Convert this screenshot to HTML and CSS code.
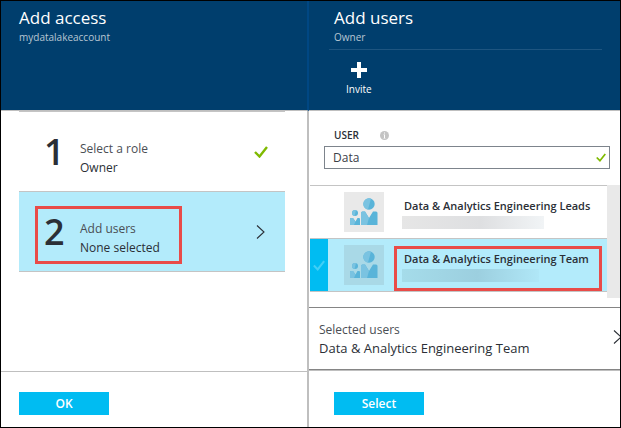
FILE: index.html
```html
<!DOCTYPE html>
<html lang="en">
<head>
<meta charset="utf-8">
<title>Add access</title>
<link rel="stylesheet" href="styles.css">
</head>
<body>
<svg class="defs" aria-hidden="true">
  <symbol id="people" viewBox="0 0 40 40">
    <circle cx="25" cy="12" r="5.700" fill="#59b4d9"/>
    <path d="M25 6.300a5.700 5.700 0 0 0-1 11.300L27 6.600z" fill="#7ac3e1"/>
    <circle cx="11" cy="21" r="3" fill="#59b4d9"/>
    <path d="M11 18a3 3 0 0 0-.5 5.950L12 18.200z" fill="#7ac3e1"/>
    <path d="M17 33V21q0-1.500 1.500-1.500h2.500l4 6.500 4-6.500h3q1.500 0 1.500 1.500v12z" fill="#59b4d9"/>
    <path d="M17 33V21q0-1.500 1.500-1.500h2.500l4 6.500-2 7z" fill="#7ac3e1"/>
    <path d="M6 33v-6q0-1 1-1h2l2.500 3.500L13.500 26h1.500q1 0 1 1v6z" fill="#59b4d9"/>
    <path d="M6 33v-6q0-1 1-1h2l2.500 3.500-1.500 3.500z" fill="#7ac3e1"/>
  </symbol>
  <symbol id="check" viewBox="0 0 14 12">
    <path d="M1 6l4.500 4.500L13 1" fill="none" stroke="currentColor" stroke-width="2.400"/>
  </symbol>
  <symbol id="chevron" viewBox="0 0 9 14">
    <path d="M1 .5l7 6.500-7 6.500" fill="none" stroke="currentColor" stroke-width="1.100"/>
  </symbol>
</svg>
<main class="blades">
  <section class="blade blade-access">
    <header class="head">
      <h1>Add access</h1>
      <p class="subtitle">mydatalakeaccount</p>
    </header>
    <div class="content">
      <ol class="steps">
        <li class="step">
          <span class="number">1</span>
          <span class="step-text"><span class="step-name">Select a role</span><span>Owner</span></span>
          <svg class="step-check"><use href="#check"/></svg>
        </li>
        <li class="step active">
          <span class="number">2</span>
          <span class="step-text"><span class="step-name">Add users</span><span>None selected</span></span>
          <svg class="step-chevron"><use href="#chevron"/></svg>
          <span class="callout"></span>
        </li>
      </ol>
    </div>
    <footer class="foot"><button class="primary" type="button">OK</button></footer>
  </section>
  <section class="blade blade-users">
    <header class="head">
      <h1>Add users</h1>
      <p class="subtitle">Owner</p>
      <div class="toolbar">
        <button class="invite" type="button">
          <svg viewBox="0 0 16 16"><path d="M6 0h4v6h6v4h-6v6H6v-6H0V6h6z" fill="#fff"/></svg>
          Invite
        </button>
      </div>
    </header>
    <div class="content">
      <div class="field">
        <div class="field-label">
          <label for="user">USER</label>
          <svg class="info" viewBox="0 0 9 9"><circle cx="4.500" cy="4.500" r="4.500" fill="#c4c4c4"/><path d="M4 1.500h1v1H4zM3.500 3.500H5V7h.5v.5h-2V7H4V4h-.5z" fill="#fff"/></svg>
        </div>
        <div class="input-wrap">
          <input id="user" type="text" value="Data">
          <svg class="input-check"><use href="#check"/></svg>
        </div>
      </div>
      <div class="results">
        <ul class="list">
          <li class="result">
            <span class="mark"></span>
            <svg class="avatar"><use href="#people"/></svg>
            <span class="who"><span class="who-name">Data &amp; Analytics Engineering Leads</span><span class="redacted"></span></span>
          </li>
          <li class="result chosen">
            <span class="mark"><svg><use href="#check"/></svg></span>
            <svg class="avatar"><use href="#people"/></svg>
            <span class="who"><span class="who-name">Data &amp; Analytics Engineering Team</span><span class="redacted"></span></span>
            <span class="callout"></span>
          </li>
        </ul>
        <div class="track"></div>
      </div>
      <div class="selected">
        <div class="selected-text"><span class="selected-label">Selected users</span><span class="selected-value">Data &amp; Analytics Engineering Team</span></div>
        <svg class="selected-chevron"><use href="#chevron"/></svg>
      </div>
    </div>
    <footer class="foot"><button class="primary" type="button">Select</button></footer>
  </section>
</main>
</body>
</html>
```
FILE: styles.css
```css
* { box-sizing: border-box; }
body {
  margin: 0;
  font-family: "Open Sans", "Noto Sans", sans-serif;
  font-size: 12px;
  line-height: 19px;
  color: #2b2f36;
}
h1, p, ol, ul { margin: 0; padding: 0; font-weight: 400; }
ol, ul { list-style: none; }
button, input { font: inherit; }
svg { display: block; flex: none; }
.defs { position: absolute; width: 0; height: 0; }

.blades {
  display: grid;
  grid-template-columns: 308fr 311fr;
  min-height: 100vh;
  border: 1px solid #000;
  background: #fff;
}
.blade { display: flex; flex-direction: column; min-width: 0; }
.head {
  min-height: 110px;
  padding: 5px 18px 0;
  background: #003e6d;
  border-bottom: 1px solid #bfbfbf;
  color: #fff;
}
.blade-users .head { padding: 5px 18px 0 25px; }
h1 { font-size: 17px; line-height: 24px; }
.subtitle { font-size: 10px; line-height: 14px; color: #b8c6d3; }
.blade-access .head { border-right: 2px solid #004783; }
.blade-access .content, .blade-access .foot { border-right: 2px solid #bfbfbf; }
.content { flex: 1; }
.foot { padding: 20px 18px 12px; border-top: 1px solid #bfbfbf; }
.blade-users .foot { padding-top: 21px; padding-left: 25px; }
.primary {
  display: block;
  width: 90px;
  height: 23px;
  padding: 0;
  border: 0;
  background: #00bcf2;
  color: #fff;
  font-size: 12px;
  font-weight: 600;
  line-height: 23px;
}
.callout { position: absolute; border: 3px solid #e94b48; }

.steps { margin: 0 22px 0 18px; border-top: 1px solid #c4c4c4; }
.step {
  position: relative;
  display: flex;
  align-items: center;
  height: 80px;
  padding: 0 17px 0 25px;
  border-bottom: 1px solid #c4c4c4;
}
.step.active { background: #b3ebfb; }
.number { width: 36px; font-size: 36px; line-height: 40px; font-weight: 600; }
.step-text { display: flex; flex: 1; flex-direction: column; padding-top: 13px; }
.step-name { color: #4a4e54; }
.step-check { width: 14px; height: 12px; color: #7fba00; }
.step-chevron { width: 9px; height: 14px; margin-right: 3px; }
.step .callout { top: 14px; left: 16px; width: 147px; height: 58px; }

.toolbar {
  margin: 5px 0 0 -5px;
  padding-top: 12px;
  border-top: 1px solid #1e5580;
}
.invite {
  display: flex;
  flex-direction: column;
  align-items: center;
  gap: 4px;
  margin-left: 17px;
  padding: 0;
  border: 0;
  background: none;
  color: #fff;
  font-size: 10px;
  line-height: 14px;
}
.invite svg { width: 16px; height: 16px; }

.field { padding: 15px 10px 16px 15px; }
.field-label {
  display: flex;
  align-items: center;
  gap: 21px;
  margin-bottom: 2px;
  padding-left: 10px;
  font-size: 10px;
  font-weight: 600;
  line-height: 18px;
}
.info { width: 9px; height: 9px; }
.input-wrap { position: relative; }
.input-wrap input {
  display: block;
  width: 100%;
  height: 23px;
  padding: 0 28px 0 8px;
  border: 1px solid #7d848c;
  border-radius: 0;
  background: #fff;
  color: #3b4047;
  outline: 0;
}
.input-check { position: absolute; top: 7px; right: 4px; width: 10px; height: 9px; color: #7fba00; }

.results { display: flex; margin-bottom: 9px; padding-left: 1px; }
.list { flex: 1; min-width: 0; margin-bottom: 6px; border-top: 1px solid #c4c4c4; }
.track { width: 13px; background: #e9e9e9; }
.result {
  position: relative;
  display: flex;
  height: 53px;
  border-bottom: 1px solid #c4c4c4;
}
.mark { display: flex; align-items: center; justify-content: center; width: 18px; margin-right: 16px; }
.mark svg { width: 12px; height: 11px; color: #41cff6; }
.avatar { width: 40px; height: 40px; margin-top: 6px; background: #e9e9e9; }
.who { display: flex; flex: 1; min-width: 0; flex-direction: column; padding: 10px 0 0 20px; white-space: nowrap; }
.who-name { font-size: 11px; font-weight: 600; line-height: 20px; }
.redacted { width: 142px; height: 13px; margin-left: -2px; background: linear-gradient(90deg, #e6e6e6, #dedfe1 55%, #f1f4f6); }
.chosen { background: #b3ebfb; }
.chosen .mark { background: #00bcf2; }
.chosen .avatar { background: #a9d9e7; }
.chosen .redacted { width: 137px; background: linear-gradient(90deg, #a5dcea, #9ccfdf 55%, #b0e7f7); }
.chosen .callout { top: 7px; right: 5px; bottom: 0; left: 84px; }

.selected {
  display: flex;
  align-items: center;
  justify-content: space-between;
  overflow: hidden;
  height: 63px;
  padding-left: 10px;
  border-top: 1px solid #858585;
  border-bottom: 1px solid #858585;
}
.selected-text { display: flex; flex-direction: column; }
.selected-label { color: #4a4e54; }
.selected-value { font-size: 13px; }
.selected-chevron { width: 9px; height: 14px; margin: 0 -2px 4px 0; }
```
